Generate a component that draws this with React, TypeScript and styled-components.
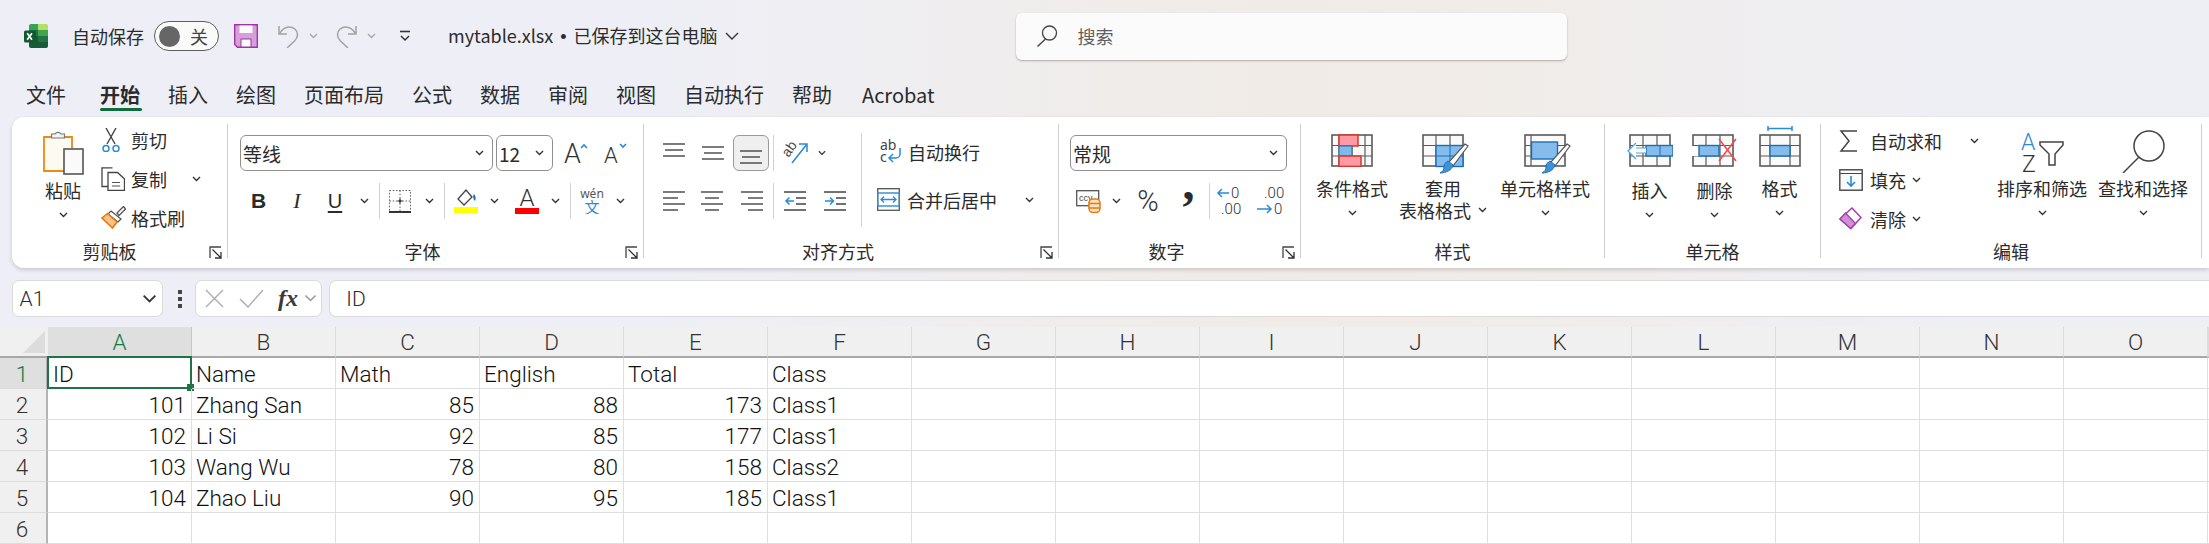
import React from 'react'
import styled, { createGlobalStyle } from 'styled-components'

const CJK_FONT = `"Noto Sans CJK SC", "Noto Sans", sans-serif`
const CELL_FONT = `Roboto, "Noto Sans CJK SC", sans-serif`

const GlobalStyle = createGlobalStyle`
  html, body { margin: 0; padding: 0; overflow: hidden; }
  body { font-family: ${CJK_FONT}; color: #2b2b2b; }
  * { box-sizing: border-box; }
`

const Window = styled.div`
  width: 2209px;
  height: 544px;
  overflow: hidden;
  background: linear-gradient(90deg, #eeeff6 0%, #eeeff6 30%, #f0ebe6 58%, #f0ece8 68%, #eeeff5 88%, #eeeff5 100%);
`

/* title bar */
const TitleBar = styled.div`
  display: flex;
  align-items: center;
  height: 72px;
  padding-left: 24px;
  font-size: 18px;
`
const TitleText = styled.span<{ $ml: number }>`
  margin-left: ${(p) => p.$ml}px;
  white-space: nowrap;
  line-height: 24px;
`
const TitleDot = styled.span`
  margin: 0 7px;
  font-family: "Liberation Sans", sans-serif;
`
const QuickIcon = styled.span<{ $ml: number }>`
  display: inline-flex;
  margin-left: ${(p) => p.$ml}px;
`
const Toggle = styled.div`
  display: flex;
  align-items: center;
  width: 65px;
  height: 30px;
  margin-left: 10px;
  padding-left: 4px;
  border: 1px solid #5c5c5c;
  border-radius: 15px;
  background: #fafafa;
  font-size: 18px;
  color: #444;
`
const ToggleKnob = styled.span`
  width: 21px;
  height: 21px;
  margin-right: 10px;
  border-radius: 50%;
  background: #666;
`
const SearchBox = styled.div`
  display: flex;
  align-items: center;
  width: 551px;
  height: 47px;
  margin-left: 277px;
  padding-left: 20px;
  gap: 20px;
  border-radius: 6px;
  background: #fbfbfb;
  box-shadow: 0 1px 2px rgba(0, 0, 0, 0.28);
  color: #5f5f5f;
`

/* tabs */
const TabBar = styled.div`
  display: flex;
  align-items: center;
  gap: 28px;
  height: 45px;
  padding-left: 26px;
`
const Tab = styled.div<{ $active?: boolean; $ml?: number }>`
  position: relative;
  margin-left: ${(p) => p.$ml ?? 0}px;
  font-family: ${CJK_FONT};
  font-size: 20px;
  line-height: 28px;
  font-weight: ${(p) => (p.$active ? 700 : 400)};
  white-space: nowrap;
  &::after {
    content: '';
    display: ${(p) => (p.$active ? 'block' : 'none')};
    position: absolute;
    left: 0;
    right: -2px;
    top: 27px;
    height: 3px;
    border-radius: 2px;
    background: #0f6c3b;
  }
`

/* ribbon */
const Ribbon = styled.div`
  display: flex;
  height: 151px;
  margin-left: 12px;
  border-radius: 12px 0 0 12px;
  background: #fff;
  box-shadow: 0 2px 4px rgba(0, 0, 0, 0.16);
`
const Group = styled.section<{ $w: number }>`
  display: flex;
  flex-direction: column;
  flex: none;
  width: ${(p) => p.$w}px;
`
const GroupSep = styled.div`
  flex: none;
  width: 1px;
  height: 134px;
  margin-top: 7px;
  background: #cfcfcf;
`
const GroupBody = styled.div<{ $pl?: number }>`
  display: flex;
  height: 123px;
  padding-left: ${(p) => p.$pl ?? 0}px;
`
const GroupFoot = styled.div<{ $pl?: number }>`
  display: flex;
  align-items: center;
  height: 24px;
  padding-left: ${(p) => p.$pl ?? 0}px;
`
const GroupLabel = styled.div`
  flex: 1;
  margin-top: -2px;
  text-align: center;
  font-size: 18px;
  line-height: 24px;
`
const Launcher = styled.span`
  display: inline-flex;
  margin: 0 5px 0 8px;
`
const LargeButton = styled.div<{ $w: number; $ml?: number }>`
  display: flex;
  flex-direction: column;
  align-items: center;
  flex: none;
  width: ${(p) => p.$w}px;
  margin-left: ${(p) => p.$ml ?? 0}px;
  font-size: 18px;
  line-height: 22px;
`
const LargeIcon = styled.div<{ $pt: number; $low?: boolean }>`
  display: flex;
  height: ${(p) => (p.$low ? 62 : 60)}px;
  padding-top: ${(p) => p.$pt}px;
`
const ButtonLine = styled.div`
  display: flex;
  align-items: center;
  height: 22px;
  white-space: nowrap;
  gap: 7px;
`
const ChevLine = styled(ButtonLine)`
  padding-top: 5px;
`
const SmallColumn = styled.div<{ $w?: number; $pt: number; $ml?: number }>`
  display: flex;
  flex-direction: column;
  flex: none;
  width: ${(p) => (p.$w ? `${p.$w}px` : 'auto')};
  margin-left: ${(p) => p.$ml ?? 0}px;
  padding-top: ${(p) => p.$pt}px;
`
const SmallRow = styled.div`
  display: flex;
  align-items: center;
  height: 39px;
  padding-bottom: 2px;
  font-size: 18px;
  white-space: nowrap;
`
const SmallIcon = styled.span<{ $w: number }>`
  display: inline-flex;
  flex: none;
  width: ${(p) => p.$w}px;
`
const ChevSlot = styled.span<{ $ml: number }>`
  display: inline-flex;
  margin-left: ${(p) => p.$ml}px;
`
const RowStack = styled.div<{ $pl?: number }>`
  display: flex;
  flex-direction: column;
  gap: 12px;
  padding-top: 18px;
  padding-left: ${(p) => p.$pl ?? 0}px;
  flex: none;
`
const ToolRow = styled.div`
  display: flex;
  align-items: center;
  height: 36px;
  font-size: 18px;
  white-space: nowrap;
`
const WrapRow = styled(ToolRow)`
  padding-bottom: 3px;
`
const SelectBox = styled.div<{ $w: number; $ml?: number }>`
  display: flex;
  align-items: center;
  justify-content: space-between;
  flex: none;
  width: ${(p) => p.$w}px;
  height: 36px;
  margin-left: ${(p) => p.$ml ?? 0}px;
  padding: 0 8px 0 2px;
  border: 1px solid #8f8f8f;
  border-radius: 6px;
  font-size: 19px;
  background: #fff;
`
const ToolCell = styled.span<{ $w: number; $ml?: number; $active?: boolean }>`
  display: inline-flex;
  align-items: center;
  justify-content: center;
  flex: none;
  width: ${(p) => p.$w}px;
  height: 36px;
  margin-left: ${(p) => p.$ml ?? 0}px;
  border: ${(p) => (p.$active ? '1px solid #9a9a9a' : 'none')};
  border-radius: 6px;
  background: ${(p) => (p.$active ? '#efefef' : 'transparent')};
`
const ToolDivider = styled.span<{ $ml?: number }>`
  flex: none;
  width: 1px;
  height: 36px;
  margin-left: ${(p) => p.$ml ?? 0}px;
  background: #d2d2d2;
`
const WrapDivider = styled.div<{ $ml: number }>`
  flex: none;
  width: 1px;
  height: 94px;
  margin: 16px 0 0 ${(p) => p.$ml}px;
  background: #d2d2d2;
`
const BoldGlyph = styled.b`
  font: 700 21px "Liberation Sans", sans-serif;
`
const ItalicGlyph = styled.i`
  font: italic 400 22px "Liberation Serif", serif;
`
const UnderGlyph = styled.u`
  font: 400 20px "Liberation Sans", sans-serif;
  text-underline-offset: 3px;
`
const PercentGlyph = styled.span`
  font: 300 29px Roboto, sans-serif;
  color: #333;
`
const CommaGlyph = styled.span`
  font: 700 48px "Liberation Serif", serif;
  line-height: 24px;
  transform: translateY(-18px);
`

/* formula bar */
const FormulaBar = styled.div`
  display: flex;
  align-items: center;
  height: 37px;
  margin-top: 12px;
  padding-left: 12px;
`
const FormulaBox = styled.div<{ $w?: number; $ml?: number }>`
  display: flex;
  align-items: center;
  flex: ${(p) => (p.$w ? 'none' : 1)};
  width: ${(p) => (p.$w ? `${p.$w}px` : 'auto')};
  height: 37px;
  margin-left: ${(p) => p.$ml ?? 0}px;
  border: 1px solid #dadada;
  border-right: ${(p) => (p.$w ? '1px solid #dadada' : 'none')};
  border-radius: ${(p) => (p.$w ? '7px' : '7px 0 0 7px')};
  background: #fff;
  font: 300 21px ${CELL_FONT};
`
const FormulaDots = styled.span`
  display: inline-flex;
  margin-left: 14px;
`
const FxGlyph = styled.i`
  font: italic 700 24px "Liberation Serif", serif;
  color: #3a3a3a;
`

/* sheet */
const Sheet = styled.div`
  display: grid;
  grid-template-columns: 48px repeat(15, 144px) 1px;
  grid-auto-rows: 31px;
  margin-top: 10px;
  background: #fff;
  font: 300 22.5px ${CELL_FONT};
  color: #111;
`
const ColHead = styled.div<{ $selected?: boolean }>`
  display: flex;
  align-items: center;
  justify-content: center;
  border-right: 1px solid ${(p) => (p.$selected ? '#c6c6c6' : '#dcdcdc')};
  border-bottom: 2px solid #a8a8a8;
  background: ${(p) => (p.$selected ? '#dfdfdf' : '#f0f0f0')};
  color: ${(p) => (p.$selected ? '#167a48' : '#333')};
`
const Corner = styled(ColHead)`
  padding: 5px 3px 4px 22px;
  border-right: none;
`
const RowHead = styled.div<{ $selected?: boolean }>`
  display: flex;
  align-items: center;
  justify-content: center;
  padding-top: 2px;
  padding-right: 2px;
  border-right: 2px solid #b4b4b4;
  border-bottom: 1px solid #dcdcdc;
  background: ${(p) => (p.$selected ? '#dfdfdf' : '#f0f0f0')};
  color: ${(p) => (p.$selected ? '#167a48' : '#333')};
`
const Cell = styled.div<{ $num?: boolean; $selected?: boolean }>`
  position: relative;
  display: flex;
  align-items: center;
  justify-content: ${(p) => (p.$num ? 'flex-end' : 'flex-start')};
  padding: 2px ${(p) => (p.$num ? 5 : 0)}px 0 ${(p) => (p.$selected ? 5 : 4)}px;
  border-right: 1px solid #dedede;
  border-bottom: 1px solid #dedede;
  white-space: nowrap;
  &[data-active='true']::before {
    content: '';
    position: absolute;
    inset: -2px -1px -1px -1px;
    border: 2px solid #217346;
  }
  &[data-active='true']::after {
    content: '';
    position: absolute;
    right: -3px;
    bottom: -3px;
    width: 7px;
    height: 7px;
    background: #217346;
  }
`

/* icons */
const Chev = ({ color = '#333', w = 9 }: { color?: string; w?: number }) => (
  <svg width={w} height={(w * 6) / 9} viewBox="0 0 9 6" fill="none">
    <path d="M1 1l3.5 3.5L8 1" stroke={color} strokeWidth={w > 9 ? 1.1 : 1.4} />
  </svg>
)

const ExcelLogo = () => (
  <svg width="24" height="24" viewBox="0 0 24 24">
    <path d="M5 2a2 2 0 0 1 2-2h7v6H5z" fill="#37a356" />
    <path d="M14 0h8a2 2 0 0 1 2 2v4H14z" fill="#b2e068" />
    <path d="M5 6h9v6H5z" fill="#217346" />
    <path d="M14 6h10v6H14z" fill="#45a34d" />
    <path d="M5 12h9v6H5z" fill="#185c37" />
    <path d="M14 12h10v6H14z" fill="#217346" />
    <path d="M5 18h19v4a2 2 0 0 1-2 2H7a2 2 0 0 1-2-2z" fill="#185c37" />
    <rect x="0" y="6.5" width="12" height="12" rx="1.5" fill="#0f5a30" />
    <path d="M3.2 9.2l4.8 6.6M8 9.2l-4.8 6.6" stroke="#fff" strokeWidth="1.7" />
  </svg>
)

const SaveIcon = () => (
  <svg width="24" height="24" viewBox="0 0 24 24">
    <path d="M.7.7h22.6v22.6H3.5L.7 20.5z" fill="#d79fd9" stroke="#a033a8" strokeWidth="1.4" />
    <rect x="5.5" y="1.5" width="13" height="7.5" fill="#fafafa" />
    <rect x="7" y="15" width="10" height="8" fill="#fafafa" stroke="#a033a8" />
  </svg>
)

const UndoIcon = ({ flip }: { flip?: boolean }) => (
  <svg width="21" height="24" viewBox="0 0 21 24" fill="none" style={flip ? { transform: 'scaleX(-1)' } : undefined}>
    <path d="M1 2v8h8" stroke="#a2a2a2" strokeWidth="1.5" />
    <path d="M1.5 9.5C4 5.5 7 3 11 3c5 0 8.5 3.5 8.5 7.5 0 2.5-1 4.5-3 6.5L9 24" stroke="#a2a2a2" strokeWidth="1.5" />
  </svg>
)

const QuickMenuIcon = () => (
  <svg width="14" height="14" viewBox="0 0 14 14" fill="none">
    <path d="M2 2.5h10" stroke="#333" strokeWidth="1.6" />
    <path d="M3 7l4 4 4-4" stroke="#333" strokeWidth="1.5" />
  </svg>
)

const TitleChev = () => (
  <svg width="14" height="9" viewBox="0 0 14 9" fill="none">
    <path d="M1 1l6 6 6-6" stroke="#333" strokeWidth="1.4" />
  </svg>
)

const SearchIcon = () => (
  <svg width="22" height="22" viewBox="0 0 22 22" fill="none">
    <circle cx="13.5" cy="8" r="7" stroke="#444" strokeWidth="1.3" />
    <path d="M9.5 14L1.5 21.5" stroke="#444" strokeWidth="1.4" />
  </svg>
)

const PasteIcon = () => (
  <svg width="41" height="45" viewBox="0 0 41 45" fill="none">
    <path d="M1 7h28v34H1z" fill="#fdfaf2" stroke="#e98a16" strokeWidth="1.8" />
    <path d="M11 9V5h3.5a3.5 3.5 0 0 1 6 0H24v4z" fill="#f4f4f4" stroke="#777" strokeWidth="1.2" transform="translate(-2.5 -1)" />
    <rect x="21" y="19" width="19" height="25" fill="#fafafa" stroke="#555" strokeWidth="1.6" />
  </svg>
)

const ScissorsIcon = () => (
  <svg width="20" height="24" viewBox="0 0 20 24" fill="none">
    <path d="M5 0l9 16M15 0L6 16" stroke="#444" strokeWidth="1.4" />
    <circle cx="5" cy="20.5" r="3" stroke="#2a8ad4" strokeWidth="1.5" />
    <circle cx="15" cy="20.5" r="3" stroke="#2a8ad4" strokeWidth="1.5" />
  </svg>
)

const CopyIcon = () => (
  <svg width="24" height="24" viewBox="0 0 24 24" fill="none">
    <path d="M9 19.5H1V.8h10.5" stroke="#444" strokeWidth="1.3" />
    <path d="M7 5.5h9.5l7 6.5v11.5H7z" fill="#fff" stroke="#444" strokeWidth="1.3" />
    <path d="M11 15.5h8M11 19h8" stroke="#555" strokeWidth="1.2" />
  </svg>
)

const BrushIcon = () => (
  <svg width="25" height="23" viewBox="0 0 25 23" fill="none">
    <path d="M16 7l6.5-6.5L24.5 3 18 9.5z" fill="#fff" stroke="#555" strokeWidth="1.3" />
    <path d="M10 5l10 8-3 3-10-8z" fill="#fff" stroke="#555" strokeWidth="1.3" />
    <path d="M6.5 7.5L1 12l10.5 10 4.5-6z" fill="#f6c48a" stroke="#e8790c" strokeWidth="1.6" />
  </svg>
)

const LauncherIcon = () => (
  <svg width="13" height="13" viewBox="0 0 13 13" fill="none">
    <path d="M1 12V1h11" stroke="#444" strokeWidth="1.3" />
    <path d="M3.5 3.5l8 8M12 6v6H6" stroke="#333" strokeWidth="1.3" />
  </svg>
)

const SizeA = ({ size, up }: { size: number; up?: boolean }) => (
  <svg width="24" height="24" viewBox="0 0 24 24" fill="none">
    <text x="0" y="22" fontFamily="Roboto" fontWeight="300" fontSize={size} fill="#333">A</text>
    <path d={up ? 'M17 7l3-3 3 3' : 'M16 3l3 3 3-3'} stroke="#2a8ad4" strokeWidth="1.6" />
  </svg>
)

const BorderIcon = () => (
  <svg width="22" height="23" viewBox="0 0 22 23" fill="none">
    <path d="M.5.5h21v21H.5zM11 .5v21M.5 11h21" stroke="#666" strokeDasharray="1.6 1.6" />
    <path d="M0 22h22" stroke="#222" strokeWidth="1.8" />
    <path d="M8.5 11h5M11 8.5v5" stroke="#222" strokeWidth="1.2" />
  </svg>
)

const FillIcon = () => (
  <svg width="24" height="24" viewBox="0 0 24 24" fill="none">
    <path d="M12 1L4 10l6 6 8-8z" fill="#fff" stroke="#444" strokeWidth="1.3" />
    <path d="M20 5c2 2 2 5 1 7-1-1-3-4-1-7z" fill="#1e6fb8" />
    <rect x="0" y="18" width="24" height="6" fill="#ffff00" />
  </svg>
)

const FontColorIcon = () => (
  <svg width="24" height="26" viewBox="0 0 24 26" fill="none">
    <text x="12" y="18" textAnchor="middle" fontFamily="Roboto" fontWeight="300" fontSize="24" fill="#333">A</text>
    <rect x="0" y="20" width="24" height="6" fill="#ff0000" />
  </svg>
)

const WenIcon = () => (
  <svg width="24" height="26" viewBox="0 0 24 26">
    <text x="12" y="10" textAnchor="middle" fontFamily="Noto Sans" fontSize="12" fill="#555">wén</text>
    <text x="12" y="25" textAnchor="middle" fontFamily="Noto Sans CJK SC" fontSize="15" fill="#2a8ad4">文</text>
  </svg>
)

const AlignLines = ({ rows, y }: { rows: [number, number][]; y: number[] }) => (
  <svg width="22" height="22" viewBox="0 0 22 22" fill="none">
    {rows.map(([a, b], i) => (
      <path key={i} d={`M${a} ${y[i]}H${b}`} stroke="#444" strokeWidth="1.4" />
    ))}
  </svg>
)

const OrientIcon = () => (
  <svg width="26" height="24" viewBox="0 0 26 24" fill="none">
    <text x="3" y="12" fontFamily="Liberation Sans" fontSize="14" fill="#444" transform="rotate(-55 9 12)">ab</text>
    <path d="M9 22L24 3M16 3h8v8" stroke="#2a8ad4" strokeWidth="1.5" />
  </svg>
)

const IndentIcon = ({ right }: { right?: boolean }) => (
  <svg width="22" height="22" viewBox="0 0 22 22" fill="none">
    <path d="M0 2h22M12 8h10M12 14h10M0 20h22" stroke="#444" strokeWidth="1.4" />
    <path d={right ? 'M1 11h8M6 7.5L9.5 11 6 14.5' : 'M2 11h8M5.5 7.5L2 11l3.5 3.5'} stroke="#2a8ad4" strokeWidth="1.5" />
  </svg>
)

const WrapIcon = () => (
  <svg width="25" height="26" viewBox="0 0 25 26" fill="none">
    <text x="3" y="11" fontFamily="Noto Sans" fontSize="14" fill="#444">ab</text>
    <text x="3" y="23" fontFamily="Noto Sans" fontSize="14" fill="#444">c</text>
    <path d="M23 9v6a4 4 0 0 1-4 4h-7M16 15l-4 4 4 4" stroke="#2a8ad4" strokeWidth="1.5" />
  </svg>
)

const MergeIcon = () => (
  <svg width="23" height="23" viewBox="0 0 23 23" fill="none">
    <rect x=".7" y=".7" width="21.6" height="21.6" stroke="#555" strokeWidth="1.3" />
    <rect x=".7" y="5" width="21.6" height="13" stroke="#2a8ad4" strokeWidth="1.4" />
    <path d="M4 11.5h15M7 8.5l-3 3 3 3M16 8.5l3 3-3 3" stroke="#2a8ad4" strokeWidth="1.3" />
  </svg>
)

const AccountingIcon = () => (
  <svg width="25" height="23" viewBox="0 0 25 23" fill="none">
    <rect x=".7" y=".7" width="22" height="15" fill="#fff" stroke="#555" strokeWidth="1.3" />
    <text x="3" y="11" fontFamily="Liberation Sans" fontSize="9" fill="#444">ccy</text>
    <rect x="13" y="9" width="11" height="13.5" rx="4" fill="#fbe3c4" stroke="#e8790c" strokeWidth="1.5" />
    <path d="M13 13.5h11M13 18h11" stroke="#e8790c" strokeWidth="1.3" />
  </svg>
)

const DecimalIcon = ({ grow }: { grow?: boolean }) => (
  <svg width="28" height="32" viewBox="0 0 28 32" fill="none">
    {grow ? (
      <>
        <text x="15" y="13" fontFamily="Roboto" fontWeight="300" fontSize="15" fill="#333">0</text>
        <text x="5" y="29" fontFamily="Roboto" fontWeight="300" fontSize="15" fill="#333">.00</text>
        <path d="M13 8H2M6 4L2 8l4 4" stroke="#2a8ad4" strokeWidth="1.5" />
      </>
    ) : (
      <>
        <text x="8" y="13" fontFamily="Roboto" fontWeight="300" fontSize="15" fill="#333">.00</text>
        <text x="18" y="29" fontFamily="Roboto" fontWeight="300" fontSize="15" fill="#333">0</text>
        <path d="M1 24h14M11 20l4 4-4 4" stroke="#2a8ad4" strokeWidth="1.5" />
      </>
    )}
  </svg>
)

const SheetGrid = ({ cols }: { cols: number[] }) => (
  <>
    <rect x="1" y="1" width="40" height="31" fill="#fafafa" stroke="#5a5a5a" strokeWidth="1.6" />
    {cols.map((c) => (
      <path key={c} d={`M${c} 1v31`} stroke="#5a5a5a" strokeWidth="1.2" />
    ))}
    <path d="M1 11.5h40M1 22h40" stroke="#5a5a5a" strokeWidth="1.2" />
  </>
)

const PaintBrush = () => (
  <g>
    <path d="M43 10l3 2-15 20-5-3z" fill="#fff" stroke="#555" strokeWidth="1.2" />
    <path d="M26 27l5 4c-1 5-7 8-13 8 3-2 4-3 4-6 0-3 2-5 4-6z" fill="#3d93d6" stroke="#1f6fb3" strokeWidth="1" />
  </g>
)

const CondFormatIcon = () => (
  <svg width="42" height="33" viewBox="0 0 42 33">
    <SheetGrid cols={[8, 21, 34]} />
    <rect x="8" y="1" width="19" height="11" fill="#ff9aa5" stroke="#d8352a" strokeWidth="1.5" />
    <rect x="8" y="12" width="13" height="10" fill="#7fb9ea" stroke="#1b6eb4" strokeWidth="1" />
    <rect x="8" y="22" width="22" height="10.4" fill="#ff9aa5" stroke="#d8352a" strokeWidth="1.5" />
  </svg>
)

const TableFormatIcon = () => (
  <svg width="42" height="33" viewBox="0 0 42 33" style={{ overflow: 'visible' }}>
    <SheetGrid cols={[14, 28]} />
    <rect x="14" y="11.5" width="27" height="21" fill="#85bcec" stroke="#1b6eb4" strokeWidth="1.4" />
    <path d="M28 11.5v21M14 22h27" stroke="#1b6eb4" strokeWidth="1" />
    <PaintBrush />
  </svg>
)

const CellStyleIcon = () => (
  <svg width="42" height="33" viewBox="0 0 42 33" style={{ overflow: 'visible' }}>
    <SheetGrid cols={[7]} />
    <rect x="7.5" y="8" width="26" height="17" fill="#85bcec" stroke="#1b6eb4" strokeWidth="1.4" />
    <PaintBrush />
  </svg>
)

const InsertCellIcon = () => (
  <svg width="47" height="33" viewBox="0 0 47 33">
    <g transform="translate(3 0)">
      <SheetGrid cols={[14, 28]} />
    </g>
    <rect x="20" y="11.5" width="27" height="10.5" fill="#85bcec" stroke="#1b6eb4" strokeWidth="1.4" />
    <path d="M34 11.5v10.5" stroke="#1b6eb4" />
    <path d="M20 14h-12v5h12" fill="#fff" stroke="#4ba6e6" strokeWidth="1.2" />
    <path d="M10 9l-8 8 8 8" fill="#fff" stroke="#4ba6e6" strokeWidth="1.3" />
  </svg>
)

const DeleteCellIcon = () => (
  <svg width="46" height="33" viewBox="0 0 46 33" style={{ overflow: 'visible' }}>
    <SheetGrid cols={[14, 28]} />
    <path d="M-1 12h8v10h-8z" fill="#fff" />
    <rect x="7" y="11.5" width="20" height="10.5" fill="#85bcec" stroke="#1b6eb4" strokeWidth="1.4" />
    <path d="M27 5l17 22M44 5L27 27" stroke="#ee4d4d" strokeWidth="1.6" />
  </svg>
)

const FormatCellIcon = () => (
  <svg width="42" height="41" viewBox="0 0 42 41">
    <path d="M9 2.5h24M9 0v5M33 0v5" stroke="#2a8ad4" strokeWidth="1.5" />
    <g transform="translate(0 8)">
      <SheetGrid cols={[11, 31]} />
      <rect x="11" y="11.5" width="20" height="10.5" fill="#85bcec" stroke="#1b6eb4" strokeWidth="1.4" />
    </g>
  </svg>
)

const SigmaIcon = () => (
  <svg width="18" height="22" viewBox="0 0 18 22" fill="none">
    <path d="M18 1H2l8 10-8 10h16" stroke="#444" strokeWidth="1.5" />
  </svg>
)

const FillDownIcon = () => (
  <svg width="24" height="22" viewBox="0 0 24 22" fill="none">
    <rect x=".8" y=".8" width="22.4" height="20.4" fill="#fafafa" stroke="#444" strokeWidth="1.4" />
    <path d="M1 4.5h22" stroke="#444" />
    <path d="M12 7v10M8 13l4 4 4-4" stroke="#2a8ad4" strokeWidth="1.6" />
  </svg>
)

const ClearIcon = () => (
  <svg width="23" height="23" viewBox="0 0 23 23" fill="none">
    <path d="M13 1l9 9.5-10 11-11-9.5z" fill="#fff" stroke="#a33db0" strokeWidth="1.5" />
    <path d="M1 12l5.5-6 10 10.5-5 5z" fill="#cf8fd3" stroke="#a33db0" strokeWidth="1.3" />
  </svg>
)

const SortIcon = () => (
  <svg width="43" height="42" viewBox="0 0 43 42" fill="none">
    <text x="0" y="19" fontFamily="Roboto" fontWeight="300" fontSize="23" fill="#2a8ad4">A</text>
    <text x="1" y="41" fontFamily="Roboto" fontWeight="300" fontSize="23" fill="#333">Z</text>
    <path d="M19 11h23v3l-8 9v11h-6V23l-9-9z" fill="#fff" stroke="#444" strokeWidth="1.5" />
  </svg>
)

const FindIcon = () => (
  <svg width="43" height="43" viewBox="0 0 43 43" fill="none">
    <circle cx="27" cy="16" r="15" fill="#fff" stroke="#444" strokeWidth="1.5" />
    <path d="M17 27L1 43" stroke="#444" strokeWidth="1.5" />
  </svg>
)

const CloseIcon = () => (
  <svg width="19" height="19" viewBox="0 0 19 19" fill="none">
    <path d="M1 1l17 17M18 1L1 18" stroke="#b0b0b0" strokeWidth="1.5" />
  </svg>
)

const CheckIcon = () => (
  <svg width="25" height="19" viewBox="0 0 25 19" fill="none">
    <path d="M1 10l8 8L24 1" stroke="#b0b0b0" strokeWidth="1.5" />
  </svg>
)

const DotsIcon = () => (
  <svg width="6" height="20" viewBox="0 0 6 20">
    <rect x="1" y="1" width="4" height="4" fill="#444" />
    <rect x="1" y="8" width="4" height="4" fill="#444" />
    <rect x="1" y="15" width="4" height="4" fill="#444" />
  </svg>
)

const CornerTriangle = () => (
  <svg width="22" height="22" viewBox="0 0 22 22">
    <path d="M22 0v22H0z" fill="#dcdcdc" />
  </svg>
)

const TABS = ['文件', '开始', '插入', '绘图', '页面布局', '公式', '数据', '审阅', '视图', '自动执行', '帮助', 'Acrobat']
const TAB_OFFSET: Record<string, number> = { 开始: 6, Acrobat: 2 }
const COLUMNS = ['A', 'B', 'C', 'D', 'E', 'F', 'G', 'H', 'I', 'J', 'K', 'L', 'M', 'N', 'O', '']
const ROWS: (string | number)[][] = [
  ['ID', 'Name', 'Math', 'English', 'Total', 'Class'],
  [101, 'Zhang San', 85, 88, 173, 'Class1'],
  [102, 'Li Si', 92, 85, 177, 'Class1'],
  [103, 'Wang Wu', 78, 80, 158, 'Class2'],
  [104, 'Zhao Liu', 90, 95, 185, 'Class1'],
  [],
]

const Foot = ({ label, launcher, pl }: { label: string; launcher?: boolean; pl?: number }) => (
  <GroupFoot $pl={pl}>
    <GroupLabel>{label}</GroupLabel>
    {launcher && (
      <Launcher>
        <LauncherIcon />
      </Launcher>
    )}
  </GroupFoot>
)

const App = () => {
  return (
    <Window>
      <GlobalStyle />
      <TitleBar>
        <ExcelLogo />
        <TitleText $ml={24}>自动保存</TitleText>
        <Toggle>
          <ToggleKnob />关
        </Toggle>
        <QuickIcon $ml={15}><SaveIcon /></QuickIcon>
        <QuickIcon $ml={20}><UndoIcon /></QuickIcon>
        <QuickIcon $ml={10}><Chev color="#a8a8a8" /></QuickIcon>
        <QuickIcon $ml={18}><UndoIcon flip /></QuickIcon>
        <QuickIcon $ml={10}><Chev color="#a8a8a8" /></QuickIcon>
        <QuickIcon $ml={22}><QuickMenuIcon /></QuickIcon>
        <TitleText $ml={36}>mytable.xlsx<TitleDot>•</TitleDot>已保存到这台电脑</TitleText>
        <QuickIcon $ml={7}><TitleChev /></QuickIcon>
        <SearchBox>
          <SearchIcon />
          搜索
        </SearchBox>
      </TitleBar>

      <TabBar>
        {TABS.map((t) => (
          <Tab key={t} $active={t === '开始'} $ml={TAB_OFFSET[t]}>{t}</Tab>
        ))}
      </TabBar>

      <Ribbon>
        <Group $w={215}>
          <GroupBody $pl={20}>
            <LargeButton $w={62}>
              <LargeIcon $pt={13} $low><PasteIcon /></LargeIcon>
              <ButtonLine>粘贴</ButtonLine>
              <ChevLine><Chev /></ChevLine>
            </LargeButton>
            <SmallColumn $pt={4} $w={113} $ml={7}>
              <SmallRow>
                <SmallIcon $w={30}><ScissorsIcon /></SmallIcon>剪切
              </SmallRow>
              <SmallRow>
                <SmallIcon $w={30}><CopyIcon /></SmallIcon>复制
                <ChevSlot $ml={25}><Chev /></ChevSlot>
              </SmallRow>
              <SmallRow>
                <SmallIcon $w={30}><BrushIcon /></SmallIcon>格式刷
              </SmallRow>
            </SmallColumn>
          </GroupBody>
          <Foot label="剪贴板" launcher pl={6} />
        </Group>
        <GroupSep />

        <Group $w={415}>
          <GroupBody>
            <RowStack $pl={12}>
              <ToolRow>
                <SelectBox $w={253}>等线<Chev /></SelectBox>
                <SelectBox $w={57} $ml={3}><span>12</span><Chev /></SelectBox>
                <ToolCell $w={24} $ml={11}><SizeA size={27} up /></ToolCell>
                <ToolCell $w={24} $ml={16}><SizeA size={22} /></ToolCell>
              </ToolRow>
              <ToolRow>
                <ToolCell $w={37}><BoldGlyph>B</BoldGlyph></ToolCell>
                <ToolCell $w={40}><ItalicGlyph>I</ItalicGlyph></ToolCell>
                <ToolCell $w={36}><UnderGlyph>U</UnderGlyph></ToolCell>
                <ToolCell $w={22}><Chev /></ToolCell>
                <ToolDivider $ml={4} />
                <ToolCell $w={40}><BorderIcon /></ToolCell>
                <ToolCell $w={18}><Chev /></ToolCell>
                <ToolDivider $ml={6} />
                <ToolCell $w={42}><FillIcon /></ToolCell>
                <ToolCell $w={14}><Chev /></ToolCell>
                <ToolCell $w={40} $ml={6}><FontColorIcon /></ToolCell>
                <ToolCell $w={16}><Chev /></ToolCell>
                <ToolDivider $ml={7} />
                <ToolCell $w={42}><WenIcon /></ToolCell>
                <ToolCell $w={14}><Chev /></ToolCell>
              </ToolRow>
            </RowStack>
          </GroupBody>
          <Foot label="字体" launcher />
        </Group>
        <GroupSep />

        <Group $w={414}>
          <GroupBody>
            <RowStack $pl={11}>
              <ToolRow>
                <ToolCell $w={38}><AlignLines rows={[[0, 22], [2, 20], [0, 22]]} y={[2, 8, 14]} /></ToolCell>
                <ToolCell $w={38} $ml={1}><AlignLines rows={[[0, 22], [2, 20], [0, 22]]} y={[5, 11, 17]} /></ToolCell>
                <ToolCell $w={36} $ml={1} $active><AlignLines rows={[[0, 22], [2, 20], [0, 22]]} y={[9, 15, 21]} /></ToolCell>
                <ToolDivider $ml={4} />
                <ToolCell $w={44}><OrientIcon /></ToolCell>
                <ToolCell $w={8}><Chev /></ToolCell>
              </ToolRow>
              <ToolRow>
                <ToolCell $w={38}><AlignLines rows={[[0, 22], [0, 15], [0, 22], [0, 15]]} y={[2, 8, 14, 20]} /></ToolCell>
                <ToolCell $w={38}><AlignLines rows={[[0, 22], [4, 18], [0, 22], [4, 18]]} y={[2, 8, 14, 20]} /></ToolCell>
                <ToolCell $w={38} $ml={2}><AlignLines rows={[[0, 22], [7, 22], [0, 22], [7, 22]]} y={[2, 8, 14, 20]} /></ToolCell>
                <ToolDivider $ml={2} />
                <ToolCell $w={42}><IndentIcon /></ToolCell>
                <ToolCell $w={37}><IndentIcon right /></ToolCell>
              </ToolRow>
            </RowStack>
            <WrapDivider $ml={8} />
            <RowStack $pl={15}>
              <WrapRow>
                <SmallIcon $w={31}><WrapIcon /></SmallIcon>自动换行
              </WrapRow>
              <WrapRow>
                <SmallIcon $w={30}><MergeIcon /></SmallIcon>合并后居中
                <ChevSlot $ml={28}><Chev /></ChevSlot>
              </WrapRow>
            </RowStack>
          </GroupBody>
          <Foot label="对齐方式" launcher />
        </Group>
        <GroupSep />

        <Group $w={241}>
          <GroupBody>
            <RowStack $pl={11}>
              <ToolRow>
                <SelectBox $w={217}>常规<Chev /></SelectBox>
              </ToolRow>
              <ToolRow>
                <ToolCell $w={36}><AccountingIcon /></ToolCell>
                <ToolCell $w={20}><Chev /></ToolCell>
                <ToolCell $w={44}><PercentGlyph>%</PercentGlyph></ToolCell>
                <ToolCell $w={37}><CommaGlyph>,</CommaGlyph></ToolCell>
                <ToolDivider $ml={2} />
                <ToolCell $w={40}><DecimalIcon grow /></ToolCell>
                <ToolCell $w={39}><DecimalIcon /></ToolCell>
              </ToolRow>
            </RowStack>
          </GroupBody>
          <Foot label="数字" launcher />
        </Group>
        <GroupSep />

        <Group $w={303}>
          <GroupBody>
            <LargeButton $w={92} $ml={5}>
              <LargeIcon $pt={17}><CondFormatIcon /></LargeIcon>
              <ButtonLine>条件格式</ButtonLine>
              <ChevLine><Chev /></ChevLine>
            </LargeButton>
            <LargeButton $w={90}>
              <LargeIcon $pt={17}><TableFormatIcon /></LargeIcon>
              <ButtonLine>套用</ButtonLine>
              <ButtonLine>表格格式<Chev /></ButtonLine>
            </LargeButton>
            <LargeButton $w={98} $ml={8}>
              <LargeIcon $pt={17}><CellStyleIcon /></LargeIcon>
              <ButtonLine>单元格样式</ButtonLine>
              <ChevLine><Chev /></ChevLine>
            </LargeButton>
          </GroupBody>
          <Foot label="样式" />
        </Group>
        <GroupSep />

        <Group $w={215}>
          <GroupBody $pl={12}>
            <LargeButton $w={65}>
              <LargeIcon $pt={17} $low><InsertCellIcon /></LargeIcon>
              <ButtonLine>插入</ButtonLine>
              <ChevLine><Chev /></ChevLine>
            </LargeButton>
            <LargeButton $w={65}>
              <LargeIcon $pt={17} $low><DeleteCellIcon /></LargeIcon>
              <ButtonLine>删除</ButtonLine>
              <ChevLine><Chev /></ChevLine>
            </LargeButton>
            <LargeButton $w={65}>
              <LargeIcon $pt={9}><FormatCellIcon /></LargeIcon>
              <ButtonLine>格式</ButtonLine>
              <ChevLine><Chev /></ChevLine>
            </LargeButton>
          </GroupBody>
          <Foot label="单元格" />
        </Group>
        <GroupSep />

        <Group $w={380}>
          <GroupBody $pl={18}>
            <SmallColumn $pt={5} $w={158}>
              <SmallRow>
                <SmallIcon $w={31}><SigmaIcon /></SmallIcon>自动求和
                <ChevSlot $ml={28}><Chev /></ChevSlot>
              </SmallRow>
              <SmallRow>
                <SmallIcon $w={31}><FillDownIcon /></SmallIcon>填充
                <ChevSlot $ml={6}><Chev /></ChevSlot>
              </SmallRow>
              <SmallRow>
                <SmallIcon $w={31}><ClearIcon /></SmallIcon>清除
                <ChevSlot $ml={6}><Chev /></ChevSlot>
              </SmallRow>
            </SmallColumn>
            <LargeButton $w={90}>
              <LargeIcon $pt={14}><SortIcon /></LargeIcon>
              <ButtonLine>排序和筛选</ButtonLine>
              <ChevLine><Chev /></ChevLine>
            </LargeButton>
            <LargeButton $w={90} $ml={11}>
              <LargeIcon $pt={13}><FindIcon /></LargeIcon>
              <ButtonLine>查找和选择</ButtonLine>
              <ChevLine><Chev /></ChevLine>
            </LargeButton>
          </GroupBody>
          <Foot label="编辑" />
        </Group>
        <GroupSep />
      </Ribbon>

      <FormulaBar>
        <FormulaBox $w={151}>
          <ToolCell $w={38}>A1</ToolCell>
          <ChevSlot $ml={91}><Chev w={15} /></ChevSlot>
        </FormulaBox>
        <FormulaDots><DotsIcon /></FormulaDots>
        <FormulaBox $w={127} $ml={12}>
          <ToolCell $w={19} $ml={9}><CloseIcon /></ToolCell>
          <ToolCell $w={25} $ml={15}><CheckIcon /></ToolCell>
          <ToolCell $w={24} $ml={12}><FxGlyph>fx</FxGlyph></ToolCell>
          <ToolCell $w={14} $ml={3}><Chev color="#9a9a9a" w={13} /></ToolCell>
        </FormulaBox>
        <FormulaBox $ml={7}>
          <ToolCell $w={22} $ml={15}>ID</ToolCell>
        </FormulaBox>
      </FormulaBar>

      <Sheet>
        <Corner><CornerTriangle /></Corner>
        {COLUMNS.map((c, i) => (
          <ColHead key={i} $selected={i === 0}>{c}</ColHead>
        ))}
        {ROWS.map((row, r) => (
          <React.Fragment key={r}>
            <RowHead $selected={r === 0}>{r + 1}</RowHead>
            {COLUMNS.map((_, c) => {
              const value = row[c]
              return (
                <Cell key={c} $num={typeof value === 'number'} $selected={r === 0 && c === 0} data-active={r === 0 && c === 0}>
                  {value}
                </Cell>
              )
            })}
          </React.Fragment>
        ))}
      </Sheet>
    </Window>
  )
}

export default App
